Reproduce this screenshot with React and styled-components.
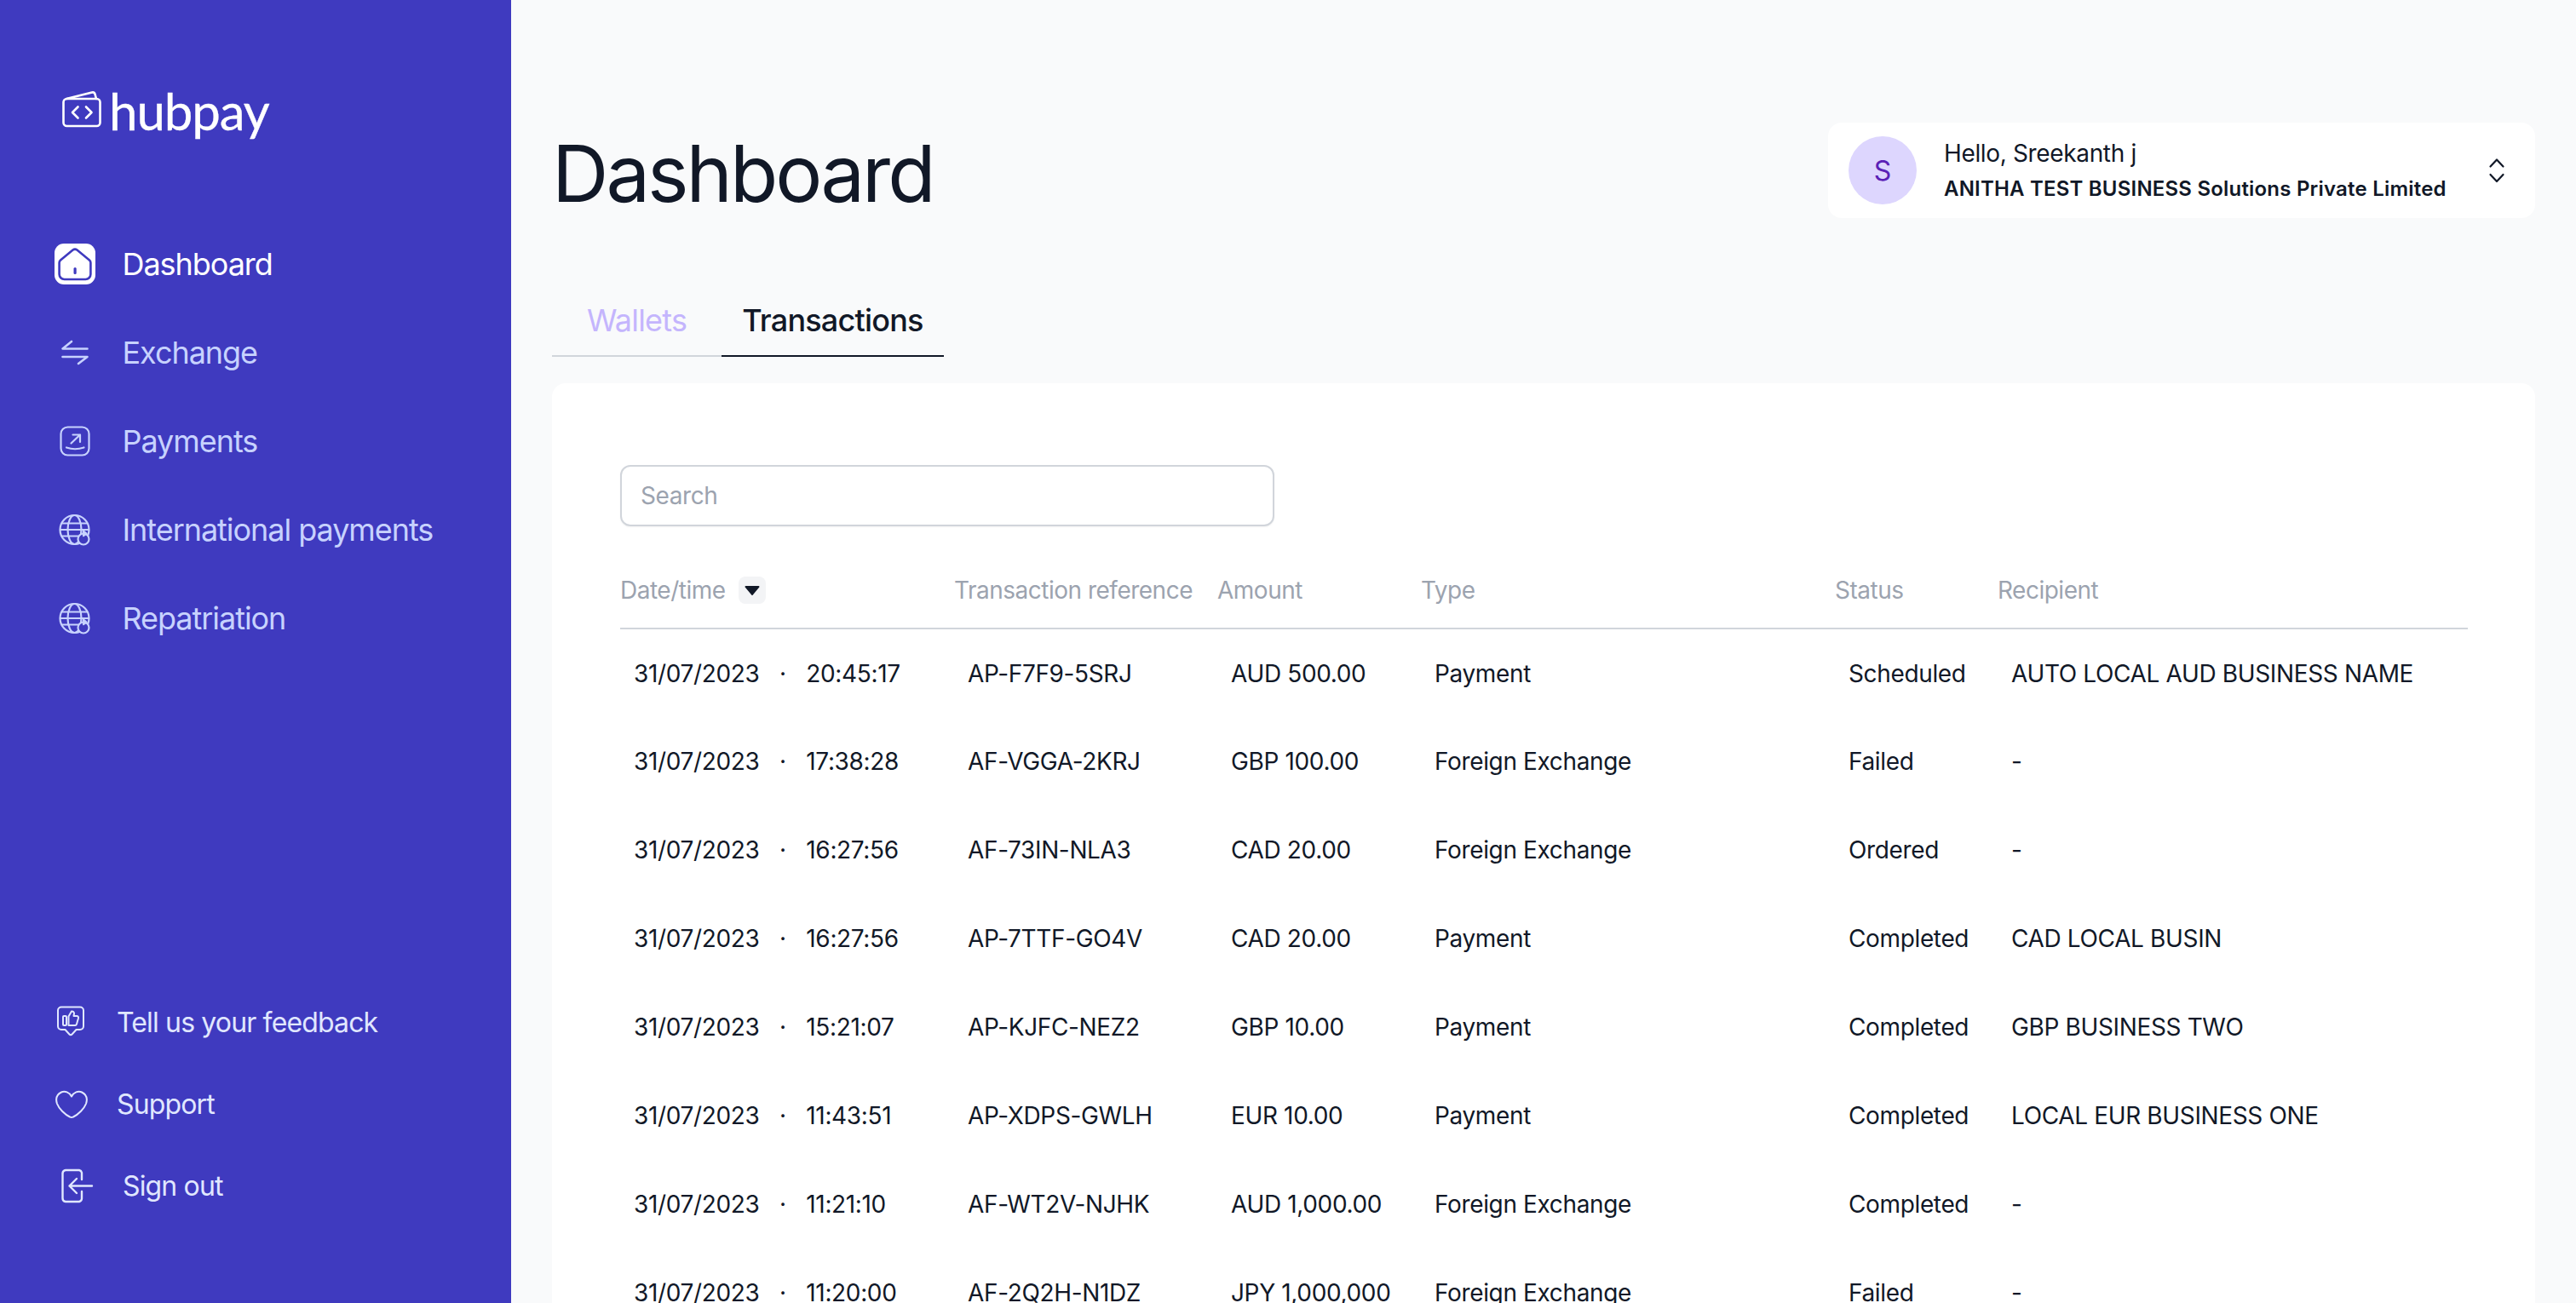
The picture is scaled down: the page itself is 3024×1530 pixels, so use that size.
import styled, { createGlobalStyle } from "styled-components";

const PURPLE = "#3f3abf";

const navItems = [
  { label: "Dashboard", icon: "home", active: true },
  { label: "Exchange", icon: "exchange" },
  { label: "Payments", icon: "payments" },
  { label: "International payments", icon: "globe" },
  { label: "Repatriation", icon: "globe" },
];

const rows = [
  ["20:45:17", "AP-F7F9-5SRJ", "AUD 500.00", "Payment", "Scheduled", "AUTO LOCAL AUD BUSINESS NAME"],
  ["17:38:28", "AF-VGGA-2KRJ", "GBP 100.00", "Foreign Exchange", "Failed", "-"],
  ["16:27:56", "AF-73IN-NLA3", "CAD 20.00", "Foreign Exchange", "Ordered", "-"],
  ["16:27:56", "AP-7TTF-GO4V", "CAD 20.00", "Payment", "Completed", "CAD LOCAL BUSIN"],
  ["15:21:07", "AP-KJFC-NEZ2", "GBP 10.00", "Payment", "Completed", "GBP BUSINESS TWO"],
  ["11:43:51", "AP-XDPS-GWLH", "EUR 10.00", "Payment", "Completed", "LOCAL EUR BUSINESS ONE"],
  ["11:21:10", "AF-WT2V-NJHK", "AUD 1,000.00", "Foreign Exchange", "Completed", "-"],
  ["11:20:00", "AF-2Q2H-N1DZ", "JPY 1,000,000", "Foreign Exchange", "Failed", "-"],
];

// 사이드바 아이콘
function NavIcon({ name }) {
  if (name === "home") {
    return (
      <svg width="48" height="48" viewBox="0 0 48 48">
        <rect x="0" y="0" width="48" height="48" rx="11" fill="#fff" />
        <path
          d="M7 19.500 21.500 7.600a4 4 0 0 1 5 0L41 19.500a4 4 0 0 1 1.400 3V36a6 6 0 0 1-6 6H11.600a6 6 0 0 1-6-6V22.500a4 4 0 0 1 1.400-3Z"
          fill="none"
          stroke={PURPLE}
          strokeWidth="2.600"
        />
        <rect x="22.500" y="28" width="3.200" height="8" rx="1.600" fill={PURPLE} />
      </svg>
    );
  }
  if (name === "exchange") {
    return (
      <svg width="48" height="48" viewBox="0 0 48 48" fill="none" stroke="currentColor" strokeWidth="2.600" strokeLinecap="round" strokeLinejoin="round">
        <path d="M20 11 9.500 19.500H38.500" />
        <path d="M9.500 29H38.500L28 37" />
      </svg>
    );
  }
  if (name === "payments") {
    return (
      <svg width="48" height="48" viewBox="0 0 48 48" fill="none" stroke="currentColor" strokeWidth="2.200" strokeLinecap="round" strokeLinejoin="round">
        <rect x="7.500" y="7.500" width="33" height="33" rx="8" />
        <path d="M19.500 26.500 30 16.500M21.500 16.500H30V25" />
        <path d="M14 31.500Q24 35 34.500 31.500" />
      </svg>
    );
  }
  return (
    <svg width="48" height="48" viewBox="0 0 48 48" fill="none" stroke="currentColor" strokeWidth="2.200" strokeLinecap="round" strokeLinejoin="round">
      <circle cx="23.500" cy="24" r="17" />
      <ellipse cx="23.500" cy="24" rx="8" ry="17" />
      <path d="M8.500 16.500H38.500M7 24H40M8.500 31.500H28" />
      <circle cx="34" cy="35" r="6.500" fill={PURPLE} />
      <path d="M34 25.500 37.500 28.500 34 31Z" fill="currentColor" />
    </svg>
  );
}

function FeedbackIcon() {
  return (
    <svg width="48" height="48" viewBox="5 0 48 48" fill="none" stroke="currentColor" strokeWidth="2" strokeLinecap="round" strokeLinejoin="round">
      <path d="M13 6.500H35a4 4 0 0 1 4 4V29a4 4 0 0 1-4 4H30.500L25.500 38.500a2 2 0 0 1-3 0L17.500 33H13a4 4 0 0 1-4-4V10.500a4 4 0 0 1 4-4Z" />
      <rect x="15" y="17" width="4" height="11" rx="1" />
      <path d="M21.500 17.500 25 11.500a2.500 2.500 0 0 1 3 2.500L27.500 17H31a2 2 0 0 1 2 2.500L31 26.500a2 2 0 0 1-2 1.500H21.500Z" />
    </svg>
  );
}

function HeartIcon() {
  return (
    <svg width="48" height="48" viewBox="4 0 48 48" fill="none" stroke="currentColor" strokeWidth="2" strokeLinejoin="round">
      <path d="M24 15.500C21.500 10.500 16 8.500 12 10.500 7 13 5 18 7 24c2 5.500 9 12.500 15 15.500a4 4 0 0 0 4 0c6-3 13-10 15-15.500 2-6 0-11-5-13.500-4-2-9.500 0-12 5Z" />
    </svg>
  );
}

function SignOutIcon() {
  return (
    <svg width="48" height="48" viewBox="0 0 48 48" fill="none" stroke="currentColor" strokeWidth="2.400" strokeLinecap="round" strokeLinejoin="round">
      <path d="M32 17V9a4 4 0 0 0-3-3H13a4 4 0 0 0-3.500 3.500V39a4 4 0 0 0 3.500 4H29a4 4 0 0 0 3-3.500V31" />
      <path d="M44 24.500H17.500M26 16l-8.500 8.500L26 33" />
    </svg>
  );
}

function App() {
  return (
    <>
      <GlobalStyle />
      <St.Page>
        <St.Sidebar>
          <St.Logo>
            <svg width="46" height="44" viewBox="0 0 46 44" fill="none" stroke="#fff" strokeWidth="2.600" strokeLinecap="round" strokeLinejoin="round">
              <rect x="1.500" y="10" width="43" height="32" rx="4" />
              <path d="M5 10 35 2.500a3 3 0 0 1 3.500 2L40 10" />
              <path d="M18.500 19.500 12 26l6.500 6.500M28 19.500l6.500 6.500-6.500 6.500" />
            </svg>
            <St.LogoText>hubpay</St.LogoText>
          </St.Logo>

          <St.Nav>
            {navItems.map((item) => (
              <St.NavItem key={item.label} $active={item.active}>
                <NavIcon name={item.icon} />
                {item.label}
              </St.NavItem>
            ))}
          </St.Nav>

          <St.Bottom>
            <St.BottomItem>
              <FeedbackIcon />
              Tell us your feedback
            </St.BottomItem>
            <St.BottomItem>
              <HeartIcon />
              Support
            </St.BottomItem>
            <St.BottomItem $signOut>
              <SignOutIcon />
              Sign out
            </St.BottomItem>
          </St.Bottom>
        </St.Sidebar>

        <St.Main>
          <St.TopRow>
            <St.Title>Dashboard</St.Title>
            <St.Profile>
              <St.Avatar>S</St.Avatar>
              <St.ProfileText>
                <St.Hello>Hello, Sreekanth j</St.Hello>
                <St.Company>ANITHA TEST BUSINESS Solutions Private Limited</St.Company>
              </St.ProfileText>
              <svg width="24" height="32" viewBox="0 0 24 32" fill="none" stroke="#111827" strokeWidth="2.200" strokeLinecap="round" strokeLinejoin="round">
                <path d="M4.500 11.500 12 3.500l7.500 8M4.500 21 12 29l7.500-8" />
              </svg>
            </St.Profile>
          </St.TopRow>

          <St.Tabs>
            <St.Tab>Wallets</St.Tab>
            <St.Tab $active>Transactions</St.Tab>
          </St.Tabs>

          <St.Card>
            <St.Search placeholder="Search" />
            <St.Table>
              <colgroup>
                <col width="392" />
                <col width="309" />
                <col width="239" />
                <col width="486" />
                <col width="191" />
                <col />
              </colgroup>
              <thead>
                <tr>
                  <St.Th>
                    <St.DateHead>
                      Date/time
                      <St.SortButton>
                        <svg width="20" height="12" viewBox="0 0 20 12">
                          <path d="M2.500 1h15a1 1 0 0 1 .8 1.600l-7.500 8.800a1 1 0 0 1-1.600 0L1.700 2.600A1 1 0 0 1 2.500 1Z" fill="#111827" />
                        </svg>
                      </St.SortButton>
                    </St.DateHead>
                  </St.Th>
                  <St.Th>Transaction reference</St.Th>
                  <St.Th>Amount</St.Th>
                  <St.Th>Type</St.Th>
                  <St.Th>Status</St.Th>
                  <St.Th>Recipient</St.Th>
                </tr>
              </thead>
              <tbody>
                {rows.map((row) => (
                  <tr key={row[1]}>
                    <St.Td>
                      <St.DateCell>
                        31/07/2023<St.Dot>·</St.Dot>{row[0]}
                      </St.DateCell>
                    </St.Td>
                    {row.slice(1).map((cell, idx) => (
                      <St.Td key={idx}>{cell}</St.Td>
                    ))}
                  </tr>
                ))}
              </tbody>
            </St.Table>
          </St.Card>
        </St.Main>
      </St.Page>
    </>
  );
}

export default App;

const GlobalStyle = createGlobalStyle`
  * {
    box-sizing: border-box;
  }

  body {
    margin: 0;
    font-family: Inter, "Liberation Sans", sans-serif;
    color: #111827;
    background-color: #f9fafb;
  }
`;

const St = {
  Page: styled.div`
    display: flex;
    height: 100vh;
    overflow: hidden;
  `,

  /* 사이드바 */
  Sidebar: styled.aside`
    display: flex;
    flex-direction: column;
    flex-shrink: 0;

    width: 600px;
    padding: 106px 0 114px 64px;

    background-color: ${PURPLE};
  `,

  Logo: styled.div`
    display: flex;
    align-items: flex-start;
    gap: 9px;

    height: 56px;
    margin-left: 9px;
  `,

  LogoText: styled.span`
    margin-top: -12px;

    font-family: Lato, sans-serif;
    font-size: 60px;
    line-height: 72px;
    letter-spacing: -1.1px;
    -webkit-text-stroke: 0.3px #fff;

    color: #fff;
  `,

  Nav: styled.nav`
    display: flex;
    flex-direction: column;

    margin-top: 96px;
  `,

  NavItem: styled.a`
    display: flex;
    align-items: center;
    gap: 31.5px;

    height: 104px;

    font-size: 36px;
    letter-spacing: -1.05px;
    color: ${({ $active }) => ($active ? "#fff" : "#c7d2fe")};
  `,

  Bottom: styled.div`
    display: flex;
    flex-direction: column;
    gap: 48px;

    margin-top: auto;
  `,

  BottomItem: styled.a`
    display: flex;
    align-items: center;
    gap: ${({ $signOut }) => ($signOut ? "32px" : "25px")};

    height: 48px;

    font-size: 32px;
    letter-spacing: -0.85px;
    color: #e0e7ff;
  `,

  /* 본문 */
  Main: styled.main`
    flex: 1;
    min-width: 0;
    padding: 144px 48px 0;
  `,

  TopRow: styled.header`
    display: flex;
    justify-content: space-between;
    align-items: center;
  `,

  Title: styled.h1`
    margin: 7px 0 0;

    font-size: 92px;
    font-weight: 400;
    line-height: 105px;
    letter-spacing: -3px;

    color: #111827;
  `,

  Profile: styled.div`
    display: flex;
    align-items: center;

    width: 830px;
    height: 112px;
    padding: 0 33px 0 24px;

    border-radius: 16px;
    background-color: #fff;

    svg {
      margin-left: auto;
    }
  `,

  Avatar: styled.div`
    display: flex;
    justify-content: center;
    align-items: center;

    width: 80px;
    height: 80px;
    margin-right: 32px;

    border-radius: 50%;
    font-size: 32px;

    color: #5b21b6;
    background-color: #ddd6fe;
  `,

  ProfileText: styled.div`
    display: flex;
    flex-direction: column;
    gap: 8px;
  `,

  Hello: styled.span`
    font-size: 28px;
    line-height: 36px;
    letter-spacing: -0.35px;
  `,

  Company: styled.span`
    font-size: 24px;
    font-weight: 600;
    line-height: 32px;
    letter-spacing: 0.2px;
  `,

  /* 탭 */
  Tabs: styled.div`
    display: flex;

    margin-top: 79px;
  `,

  Tab: styled.button`
    height: 84px;
    padding: 0 ${({ $active }) => ($active ? "24px" : "41px")};

    border: none;
    border-bottom: 2px solid ${({ $active }) => ($active ? "#111827" : "#d1d5db")};
    background: none;

    font-family: inherit;
    font-size: 36px;
    font-weight: ${({ $active }) => ($active ? 500 : 400)};
    letter-spacing: -0.8px;

    color: ${({ $active }) => ($active ? "#111827" : "#c4b5fd")};
  `,

  /* 거래 카드 */
  Card: styled.section`
    margin-top: 31px;
    padding: 96px 79px 0 80px;

    border-radius: 16px 16px 0 0;
    background-color: #fff;
  `,

  Search: styled.input`
    display: block;

    width: 768px;
    height: 72px;
    padding: 0 22px;

    border: 2px solid #d1d5db;
    border-radius: 12px;
    box-shadow: 0 1px 2px rgba(0, 0, 0, 0.05);

    font-family: inherit;
    font-size: 28px;
    letter-spacing: -0.4px;

    &::placeholder {
      color: #9ca3af;
      opacity: 1;
    }
  `,

  Table: styled.table`
    width: 100%;
    margin-top: 31px;

    border-collapse: collapse;
    table-layout: fixed;
  `,

  Th: styled.th`
    height: 89px;
    padding: 0;

    border-bottom: 2px solid #d1d5db;

    font-size: 28px;
    font-weight: 400;
    letter-spacing: -0.5px;
    text-align: left;

    color: #9ca3af;
  `,

  DateHead: styled.span`
    display: flex;
    align-items: center;
    gap: 15px;
  `,

  SortButton: styled.span`
    display: flex;
    justify-content: center;
    align-items: center;

    width: 32px;
    height: 32px;

    border-radius: 8px;
    background-color: #f3f4f6;
  `,

  Td: styled.td`
    height: 104px;
    padding: 0 16px;

    font-size: 28px;
    letter-spacing: -0.36px;
    white-space: nowrap;

    color: #111827;
  `,

  DateCell: styled.span`
    display: flex;
    align-items: center;
  `,

  Dot: styled.span`
    width: 55px;
    text-align: center;
  `,
};
